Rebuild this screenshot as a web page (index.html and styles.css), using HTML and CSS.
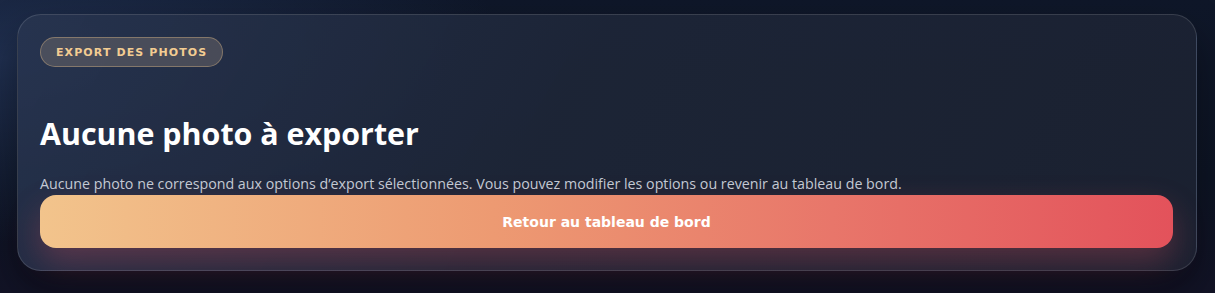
FILE: index.html
```html
<!DOCTYPE html>
<html lang="fr">
<head>
<meta charset="utf-8">
<title>Export des photos</title>
<link rel="stylesheet" href="styles.css">
</head>
<body>
<main class="page">
  <section class="card">
    <span class="badge">Export des photos</span>
    <h1 class="title">Aucune photo à exporter</h1>
    <p class="text">Aucune photo ne correspond aux options d’export sélectionnées. Vous pouvez modifier les options ou revenir au tableau de bord.</p>
    <button class="btn" type="button">Retour au tableau de bord</button>
  </section>
</main>
</body>
</html>
```
FILE: styles.css
```css
html, body {
  margin: 0;
  height: 100%;
}
body {
  background:
    radial-gradient(ellipse 60% 90% at 0% 20%, rgba(37, 55, 92, 0.75), rgba(37, 55, 92, 0) 70%),
    linear-gradient(180deg, #0f1729 0%, #0d1424 60%, #121326 100%);
  font-family: "Open Sans", "Noto Sans", sans-serif;
  color: #fff;
}
.page {
  padding: 14px 18px 22px 17px;
}
.card {
  display: flex;
  flex-direction: column;
  align-items: flex-start;
  padding: 22px 23px 22px 22px;
  border: 1px solid rgba(255, 255, 255, 0.13);
  border-radius: 24px;
  background: linear-gradient(120deg, rgba(40, 53, 80, 0.85) 0%, rgba(30, 38, 56, 0.9) 45%, rgba(28, 34, 50, 0.9) 100%);
  box-shadow: 0 20px 40px rgba(0, 0, 0, 0.35);
}
.badge {
  display: inline-flex;
  align-items: center;
  height: 28px;
  padding: 0 15px;
  border: 1px solid rgba(243, 201, 139, 0.35);
  border-radius: 999px;
  background: rgba(120, 112, 110, 0.45);
  color: #f3cc92;
  font-family: "DejaVu Sans", Verdana, sans-serif;
  font-weight: 700;
  font-size: 11px;
  letter-spacing: 1.1px;
  text-transform: uppercase;
}
.title {
  margin: 47px 0 0;
  font-size: 30.4px;
  line-height: 40px;
  font-weight: 700;
  color: #ffffff;
}
.text {
  margin: 20px 0 0;
  font-size: 14.25px;
  line-height: 20px;
  color: #c4cbd6;
}
.btn {
  align-self: stretch;
  margin-top: 1px;
  height: 53px;
  border: 0;
  border-radius: 16px;
  background: linear-gradient(90deg, #f2c48c 0%, #ed9a72 40%, #e8766a 70%, #e3525b 100%);
  box-shadow: 0 14px 32px rgba(226, 84, 96, 0.3);
  color: #fff;
  font-family: "DejaVu Sans", Verdana, sans-serif;
  font-weight: 700;
  font-size: 14px;
  cursor: pointer;
}
```
